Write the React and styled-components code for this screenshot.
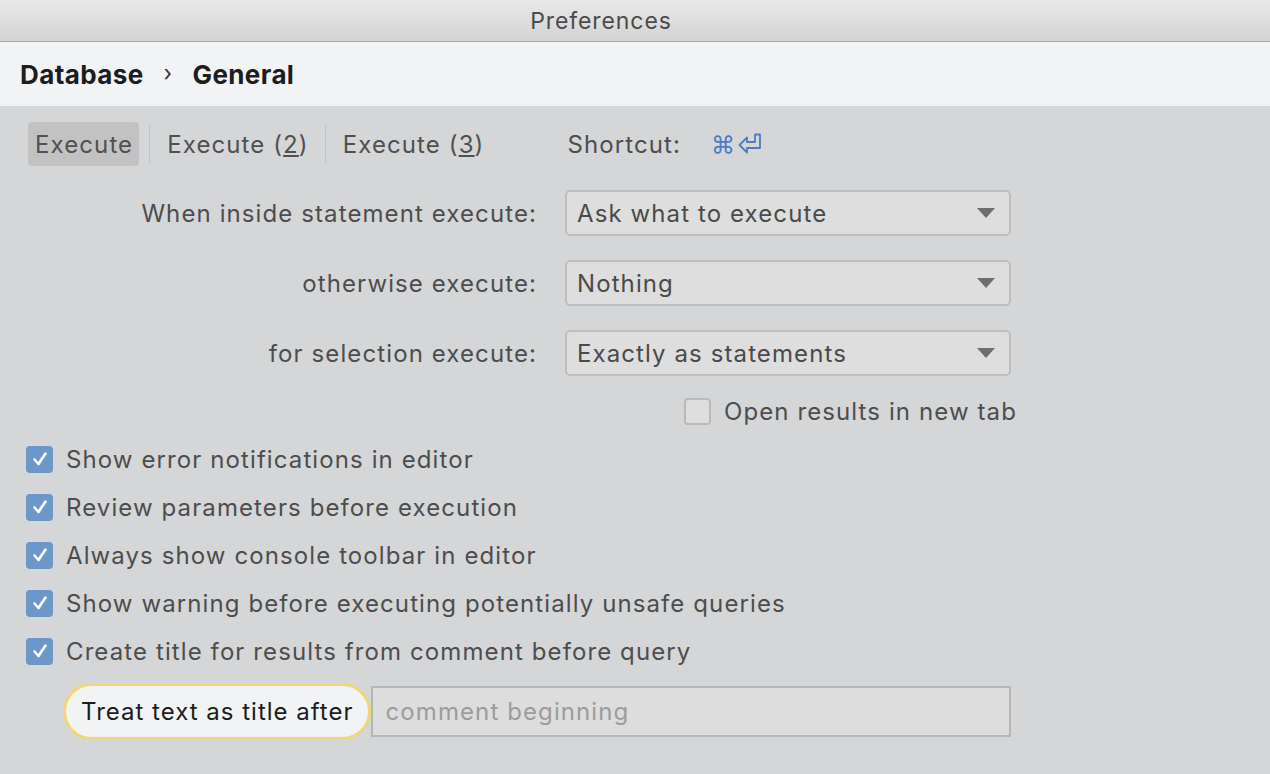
import React from "react";
import styled, { createGlobalStyle } from "styled-components";

const GlobalStyle = createGlobalStyle`
  html, body {
    margin: 0;
    padding: 0;
    background: #d5d6d8;
  }
  body {
    font-family: Inter, "Liberation Sans", Arial, sans-serif;
  }
`;

const Window = styled.div`
  width: 1270px;
  height: 774px;
  background: #d5d6d8;
  overflow: hidden;
  display: flex;
  flex-direction: column;
`;

const TitleBar = styled.div`
  height: 41px;
  border-bottom: 1px solid #a9a9a9;
  background: linear-gradient(#e9e9e9, #d3d3d3);
  display: flex;
  align-items: center;
  justify-content: center;
  font-size: 23px;
  letter-spacing: 0.9px;
  color: #4b4b4b;
  padding-right: 68px;
`;

const Breadcrumb = styled.div`
  height: 64px;
  background: #f2f3f5;
  display: flex;
  align-items: center;
  padding-left: 20px;
  gap: 20px;
  font-size: 26px;
  font-weight: bold;
  letter-spacing: 0.4px;
  color: #1d1d1f;
`;

const Chevron = styled.span`
  font-size: 22px;
  font-weight: normal;
  color: #333;
  margin-top: -3px;
`;

const Content = styled.div`
  padding: 16px 0 0 28px;
  color: #4d4d4d;
  font-size: 24px;
  letter-spacing: 1.1px;
`;

const TabRow = styled.div`
  display: flex;
  align-items: center;
  height: 44px;
`;

const Tab = styled.div`
  height: 44px;
  display: flex;
  align-items: center;
  padding: 0 6px 0 7px;
  border-radius: 4px;
  background: ${(p) => (p.$active ? "#c2c2c3" : "transparent")};
  color: #505050;
`;

const Sep = styled.div`
  width: 1px;
  height: 38px;
  background: #c4c4c6;
  margin: 0 10px;
`;

const Shortcut = styled.div`
  display: flex;
  align-items: center;
  margin-left: 77px;
  gap: 30px;
`;

const Keys = styled.span`
  display: flex;
  align-items: center;
  color: #4f7bbf;
  gap: 1px;
  font-size: 24px;
`;

const FormGrid = styled.div`
  display: grid;
  grid-template-columns: 509px 446px;
  column-gap: 28px;
  row-gap: 24px;
  margin-top: 24px;
  align-items: center;
`;

const Label = styled.div`
  text-align: right;
  color: #4d4d4d;
`;

const Select = styled.div`
  height: 46px;
  box-sizing: border-box;
  border: 2px solid #bdbdbd;
  border-radius: 5px;
  background: #dedede;
  display: flex;
  align-items: center;
  justify-content: space-between;
  padding: 0 14px 0 10px;
  color: #4a4a4a;
`;

const Triangle = styled.span`
  width: 0;
  height: 0;
  border-left: 9px solid transparent;
  border-right: 9px solid transparent;
  border-top: 10px solid #6e6e6e;
`;

const CheckRow = styled.div`
  height: 48px;
  display: flex;
  align-items: center;
  gap: 13px;
`;

const Box = styled.div`
  width: 27px;
  height: 27px;
  box-sizing: border-box;
  border-radius: 4px;
  display: flex;
  align-items: center;
  justify-content: center;
  background: ${(p) => (p.$checked ? "#6c97c9" : "#dedede")};
  border: ${(p) => (p.$checked ? "none" : "2px solid #b9b9b9")};
`;

const OpenRow = styled.div`
  margin-top: 11px;
  padding-left: 656px;
`;

const Checks = styled.div`
  margin-left: -2px;
`;

const TitleRow = styled.div`
  display: flex;
  align-items: center;
  margin: 8px 0 0 35px;
`;

const Pill = styled.div`
  height: 57px;
  box-sizing: border-box;
  border: 3px solid #efd67a;
  border-radius: 29px;
  background: #f2f3f5;
  display: flex;
  align-items: center;
  padding: 0 15px 0 15px;
  color: #1c1c1e;
  letter-spacing: 1px;
`;

const TextInput = styled.div`
  width: 640px;
  height: 51px;
  box-sizing: border-box;
  border: 2px solid #b6b6b6;
  background: #dddddd;
  display: flex;
  align-items: center;
  padding-left: 12px;
  color: #9c9c9c;
`;

const Check = ({ checked }) => (
  <Box $checked={checked}>
    {checked && (
      <svg width="18" height="18" viewBox="0 0 18 18">
        <path
          d="M3.5 9.5 L7.5 14 L14.5 3.5"
          fill="none"
          stroke="#fff"
          strokeWidth="2.6"
          strokeLinecap="round"
          strokeLinejoin="round"
        />
      </svg>
    )}
  </Box>
);

const options = [
  "Show error notifications in editor",
  "Review parameters before execution",
  "Always show console toolbar in editor",
  "Show warning before executing potentially unsafe queries",
  "Create title for results from comment before query",
];

const selects = [
  ["When inside statement execute:", "Ask what to execute"],
  ["otherwise execute:", "Nothing"],
  ["for selection execute:", "Exactly as statements"],
];

export default function App() {
  return (
    <Window>
      <GlobalStyle />
      <TitleBar>Preferences</TitleBar>
      <Breadcrumb>
        <span>Database</span>
        <Chevron>›</Chevron>
        <span>General</span>
      </Breadcrumb>
      <Content>
        <TabRow>
          <Tab $active>Execute</Tab>
          <Sep />
          <Tab>
            Execute (<u>2</u>)
          </Tab>
          <Sep />
          <Tab>
            Execute (<u>3</u>)
          </Tab>
          <Shortcut>
            <span>Shortcut:</span>
            <Keys>
              <span>⌘</span>
              <svg width="26" height="26" viewBox="0 0 26 26">
                <path
                  d="M18 3.5 H23 V17 H10 V21.5 L2.5 14 L10 6.5 V11 H18 Z"
                  fill="none"
                  stroke="#4f7bbf"
                  strokeWidth="1.8"
                  strokeLinejoin="round"
                />
              </svg>
            </Keys>
          </Shortcut>
        </TabRow>
        <FormGrid>
          {selects.map(([label, value]) => (
            <React.Fragment key={label}>
              <Label>{label}</Label>
              <Select>
                <span>{value}</span>
                <Triangle />
              </Select>
            </React.Fragment>
          ))}
        </FormGrid>
        <OpenRow>
          <CheckRow>
            <Check />
            <span>Open results in new tab</span>
          </CheckRow>
        </OpenRow>
        <Checks>
          {options.map((o) => (
            <CheckRow key={o}>
              <Check checked />
              <span>{o}</span>
            </CheckRow>
          ))}
        </Checks>
        <TitleRow>
          <Pill>Treat text as title after</Pill>
          <TextInput>comment beginning</TextInput>
        </TitleRow>
      </Content>
    </Window>
  );
}
